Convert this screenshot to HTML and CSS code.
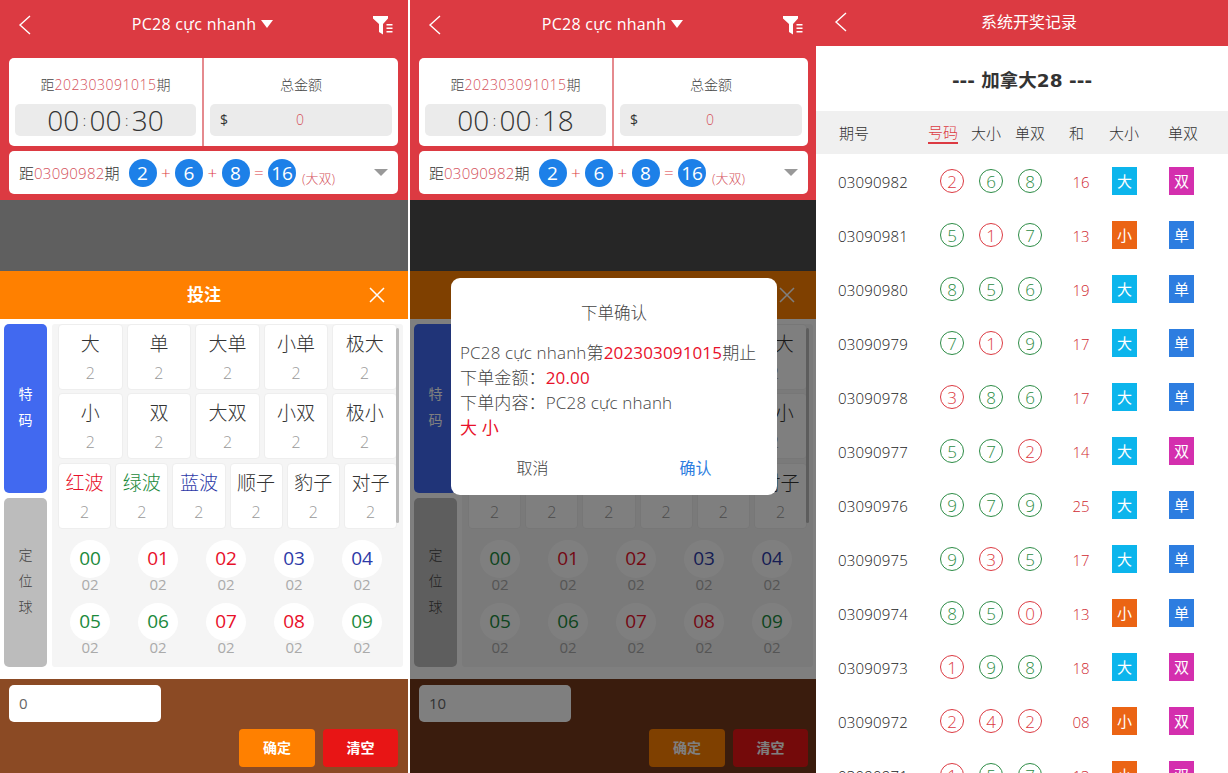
FILE: index.html
```html
<!DOCTYPE html>
<html lang="zh">
<head>
    <meta charset="UTF-8">
    <meta name="viewport" content="width=device-width, initial-scale=1.0">
    <title>PC28 投注</title>
    <link rel="stylesheet" href="styles.css">
</head>
<body>
    <div class="phone">
        <div class="phone-inner">
            <div class="top">
                <div class="nav">
                    <svg class="back" width="14" height="22" viewBox="0 0 14 22"><polyline points="12,2 2,11 12,20"/></svg>
                    <div class="nav-title">PC28 cực nhanh<span class="caret"></span></div>
                    <svg class="filter" width="20" height="19" viewBox="0 0 20 19"><path d="M0 0h15v2.500L10 8v10.500L6 16V8L0 2.500z"/><path d="M13.500 8h6v1.500h-6zM13.500 11.500h6V13h-6zM13.500 15h6v1.500h-6z"/></svg>
                </div>
                <div class="info">
                    <div class="info-col">
                        <div class="info-label">距<span class="pink">202303091015</span>期</div>
                        <div class="timer">00<i>:</i>00<i>:</i>30</div>
                    </div>
                    <div class="info-col">
                        <div class="info-label">总金额</div>
                        <div class="amount"><span class="dollar">$</span><span class="pink">0</span></div>
                    </div>
                </div>
                <div class="last">
                    <span class="last-label">距<span class="pink">03090982</span>期</span>
                    <b class="ball">2</b><em>+</em><b class="ball">6</b><em>+</em><b class="ball">8</b><em>=</em><b class="ball">16</b>
                    <span class="last-note">(大双)</span>
                    <span class="last-caret"></span>
                </div>
            </div>
            <div class="backdrop"></div>
            <div class="sheet-head">投注<svg class="close" width="18" height="18" viewBox="0 0 18 18"><path d="M2 2l14 14M16 2L2 16"/></svg></div>
            <div class="sheet-body">
                <div class="tabs">
                    <div class="tab tab-on">特<br>码</div>
                    <div class="tab">定<br>位<br>球</div>
                </div>
                <div class="content">
                    <div class="cells">
                        <div class="cell"><p>大</p><span>2</span></div>
                        <div class="cell"><p>单</p><span>2</span></div>
                        <div class="cell"><p>大单</p><span>2</span></div>
                        <div class="cell"><p>小单</p><span>2</span></div>
                        <div class="cell"><p>极大</p><span>2</span></div>
                    </div>
                    <div class="cells">
                        <div class="cell"><p>小</p><span>2</span></div>
                        <div class="cell"><p>双</p><span>2</span></div>
                        <div class="cell"><p>大双</p><span>2</span></div>
                        <div class="cell"><p>小双</p><span>2</span></div>
                        <div class="cell"><p>极小</p><span>2</span></div>
                    </div>
                    <div class="cells">
                        <div class="cell"><p class="red">红波</p><span>2</span></div>
                        <div class="cell"><p class="green">绿波</p><span>2</span></div>
                        <div class="cell"><p class="navy">蓝波</p><span>2</span></div>
                        <div class="cell"><p>顺子</p><span>2</span></div>
                        <div class="cell"><p>豹子</p><span>2</span></div>
                        <div class="cell"><p>对子</p><span>2</span></div>
                    </div>
                    <div class="scrollbar"></div>
                    <div class="nums">
                        <div class="num"><b class="green">00</b><span>02</span></div>
                        <div class="num"><b class="red">01</b><span>02</span></div>
                        <div class="num"><b class="red">02</b><span>02</span></div>
                        <div class="num"><b class="navy">03</b><span>02</span></div>
                        <div class="num"><b class="navy">04</b><span>02</span></div>
                        <div class="num"><b class="green">05</b><span>02</span></div>
                        <div class="num"><b class="green">06</b><span>02</span></div>
                        <div class="num"><b class="red">07</b><span>02</span></div>
                        <div class="num"><b class="red">08</b><span>02</span></div>
                        <div class="num"><b class="green">09</b><span>02</span></div>
                    </div>
                </div>
            </div>
            <div class="foot">
                <div class="foot-input">0</div>
                <div class="foot-btns">
                    <div class="btn btn-ok">确定</div>
                    <div class="btn btn-clear">清空</div>
                </div>
            </div>
        </div>
    </div>

    <div class="phone phone-dim">
        <div class="phone-inner">
            <div class="top">
                <div class="nav">
                    <svg class="back" width="14" height="22" viewBox="0 0 14 22"><polyline points="12,2 2,11 12,20"/></svg>
                    <div class="nav-title">PC28 cực nhanh<span class="caret"></span></div>
                    <svg class="filter" width="20" height="19" viewBox="0 0 20 19"><path d="M0 0h15v2.500L10 8v10.500L6 16V8L0 2.500z"/><path d="M13.500 8h6v1.500h-6zM13.500 11.500h6V13h-6zM13.500 15h6v1.500h-6z"/></svg>
                </div>
                <div class="info">
                    <div class="info-col">
                        <div class="info-label">距<span class="pink">202303091015</span>期</div>
                        <div class="timer">00<i>:</i>00<i>:</i>18</div>
                    </div>
                    <div class="info-col">
                        <div class="info-label">总金额</div>
                        <div class="amount"><span class="dollar">$</span><span class="pink">0</span></div>
                    </div>
                </div>
                <div class="last">
                    <span class="last-label">距<span class="pink">03090982</span>期</span>
                    <b class="ball">2</b><em>+</em><b class="ball">6</b><em>+</em><b class="ball">8</b><em>=</em><b class="ball">16</b>
                    <span class="last-note">(大双)</span>
                    <span class="last-caret"></span>
                </div>
            </div>
            <div class="backdrop"></div>
            <div class="sheet-head">投注<svg class="close" width="18" height="18" viewBox="0 0 18 18"><path d="M2 2l14 14M16 2L2 16"/></svg></div>
            <div class="sheet-body">
                <div class="tabs">
                    <div class="tab tab-on">特<br>码</div>
                    <div class="tab">定<br>位<br>球</div>
                </div>
                <div class="content">
                    <div class="cells">
                        <div class="cell"><p>大</p><span>2</span></div>
                        <div class="cell"><p>单</p><span>2</span></div>
                        <div class="cell"><p>大单</p><span>2</span></div>
                        <div class="cell"><p>小单</p><span>2</span></div>
                        <div class="cell"><p>极大</p><span>2</span></div>
                    </div>
                    <div class="cells">
                        <div class="cell"><p>小</p><span>2</span></div>
                        <div class="cell"><p>双</p><span>2</span></div>
                        <div class="cell"><p>大双</p><span>2</span></div>
                        <div class="cell"><p>小双</p><span>2</span></div>
                        <div class="cell"><p>极小</p><span>2</span></div>
                    </div>
                    <div class="cells">
                        <div class="cell"><p class="red">红波</p><span>2</span></div>
                        <div class="cell"><p class="green">绿波</p><span>2</span></div>
                        <div class="cell"><p class="navy">蓝波</p><span>2</span></div>
                        <div class="cell"><p>顺子</p><span>2</span></div>
                        <div class="cell"><p>豹子</p><span>2</span></div>
                        <div class="cell"><p>对子</p><span>2</span></div>
                    </div>
                    <div class="scrollbar"></div>
                    <div class="nums">
                        <div class="num"><b class="green">00</b><span>02</span></div>
                        <div class="num"><b class="red">01</b><span>02</span></div>
                        <div class="num"><b class="red">02</b><span>02</span></div>
                        <div class="num"><b class="navy">03</b><span>02</span></div>
                        <div class="num"><b class="navy">04</b><span>02</span></div>
                        <div class="num"><b class="green">05</b><span>02</span></div>
                        <div class="num"><b class="green">06</b><span>02</span></div>
                        <div class="num"><b class="red">07</b><span>02</span></div>
                        <div class="num"><b class="red">08</b><span>02</span></div>
                        <div class="num"><b class="green">09</b><span>02</span></div>
                    </div>
                </div>
            </div>
            <div class="foot">
                <div class="foot-input">10</div>
                <div class="foot-btns">
                    <div class="btn btn-ok">确定</div>
                    <div class="btn btn-clear">清空</div>
                </div>
            </div>
            <div class="mask"></div>
            <div class="dialog">
                <div class="dialog-title">下单确认</div>
                <div class="dialog-text">
                    <div>PC28 cực nhanh第<span class="red">202303091015</span>期止</div>
                    <div>下单金额：<span class="red">20.00</span></div>
                    <div>下单内容：PC28 cực nhanh</div>
                    <div class="red">大 小</div>
                </div>
                <div class="dialog-btns">
                    <div class="dialog-cancel">取消</div>
                    <div class="dialog-ok">确认</div>
                </div>
            </div>
        </div>
    </div>

    <div class="records">
        <div class="rec-nav">
            <svg class="back" width="14" height="22" viewBox="0 0 14 22"><polyline points="12,2 2,11 12,20"/></svg>
            系统开奖记录
        </div>
        <div class="rec-title">--- 加拿大28 ---</div>
        <div class="rec-head">
            <span>期号</span><span class="rec-active">号码</span><span>大小</span><span>单双</span><span>和</span><span>大小</span><span>单双</span>
        </div>
        <div class="rec-row"><span>03090982</span><i class="r">2</i><i class="g">6</i><i class="g">8</i><em>16</em><b class="t-big">大</b><b class="t-even">双</b></div>
        <div class="rec-row"><span>03090981</span><i class="g">5</i><i class="r">1</i><i class="g">7</i><em>13</em><b class="t-small">小</b><b class="t-odd">单</b></div>
        <div class="rec-row"><span>03090980</span><i class="g">8</i><i class="g">5</i><i class="g">6</i><em>19</em><b class="t-big">大</b><b class="t-odd">单</b></div>
        <div class="rec-row"><span>03090979</span><i class="g">7</i><i class="r">1</i><i class="g">9</i><em>17</em><b class="t-big">大</b><b class="t-odd">单</b></div>
        <div class="rec-row"><span>03090978</span><i class="r">3</i><i class="g">8</i><i class="g">6</i><em>17</em><b class="t-big">大</b><b class="t-odd">单</b></div>
        <div class="rec-row"><span>03090977</span><i class="g">5</i><i class="g">7</i><i class="r">2</i><em>14</em><b class="t-big">大</b><b class="t-even">双</b></div>
        <div class="rec-row"><span>03090976</span><i class="g">9</i><i class="g">7</i><i class="g">9</i><em>25</em><b class="t-big">大</b><b class="t-odd">单</b></div>
        <div class="rec-row"><span>03090975</span><i class="g">9</i><i class="r">3</i><i class="g">5</i><em>17</em><b class="t-big">大</b><b class="t-odd">单</b></div>
        <div class="rec-row"><span>03090974</span><i class="g">8</i><i class="g">5</i><i class="r">0</i><em>13</em><b class="t-small">小</b><b class="t-odd">单</b></div>
        <div class="rec-row"><span>03090973</span><i class="r">1</i><i class="g">9</i><i class="g">8</i><em>18</em><b class="t-big">大</b><b class="t-even">双</b></div>
        <div class="rec-row"><span>03090972</span><i class="r">2</i><i class="r">4</i><i class="r">2</i><em>08</em><b class="t-small">小</b><b class="t-even">双</b></div>
        <div class="rec-row"><span>03090971</span><i class="r">1</i><i class="g">5</i><i class="g">7</i><em>13</em><b class="t-small">小</b><b class="t-even">双</b></div>
    </div>
</body>
</html>
```

FILE: styles.css
```css
* {
    box-sizing: border-box;
}
html, body {
    height: 100%;
    overflow: hidden;
}
body {
    margin: 0;
    display: flex;
    background-color: #fff;
    font-family: "Open Sans", "Noto Sans CJK SC", sans-serif;
    font-size: 14px;
    font-weight: 300;
    color: #333;
}
p {
    margin: 0;
}
i, em {
    font-style: normal;
}
.red { color: #e8102a; }
.green { color: #1c8a3c; }
.navy { color: #2d3aa8; }
.pink { color: #d4505a; }

.phone {
    width: 408px;
    height: 773px;
    overflow: hidden;
    flex: none;
}
.phone-dim {
    width: 406px;
    margin-left: 2px;
}
.phone-inner {
    position: relative;
    width: 408px;
    height: 773px;
    display: flex;
    flex-direction: column;
}

/* top red area */
.top {
    height: 200px;
    flex: none;
    padding: 0 10px 0 9px;
    background-color: #dc3a42;
}
.nav {
    height: 58px;
    display: flex;
    align-items: flex-start;
    justify-content: space-between;
    color: #fff;
    padding: 14px 5px 0 9px;
}
.back {
    fill: none;
    stroke: #fff;
    stroke-width: 1.4;
}
.nav-title {
    font-size: 16px;
    font-weight: 400;
    letter-spacing: 0.3px;
    line-height: 20px;
}
.caret {
    display: inline-block;
    margin-left: 5px;
    vertical-align: 2px;
    border-left: 6.5px solid transparent;
    border-right: 6.5px solid transparent;
    border-top: 8px solid #fff;
}
.filter {
    fill: #fff;
    margin-top: 2px;
}
.info {
    height: 88px;
    display: flex;
    background-color: #fff;
    border-radius: 5px;
}
.info-col {
    flex: 1;
    padding: 0 6px;
    text-align: center;
}
.info-col:first-child {
    flex: none;
    width: 195px;
    border-right: 2px solid #e58a8e;
}
.info-label {
    height: 46px;
    padding-top: 16px;
    line-height: 22px;
    font-size: 14px;
    color: #444;
}
.info-label .pink {
    letter-spacing: 0.5px;
}
.timer {
    height: 32px;
    line-height: 32px;
    font-size: 28px;
    color: #333;
    background-color: #ebebeb;
    border-radius: 5px;
}
.timer i {
    font-size: 14px;
    vertical-align: 5px;
    margin: 0 3.5px;
}
.amount {
    height: 32px;
    line-height: 32px;
    display: flex;
    padding: 0 88px 0 10px;
    justify-content: space-between;
    background-color: #ebebeb;
    border-radius: 5px;
}
.dollar {
    font-weight: 400;
}
.last {
    height: 43px;
    margin-top: 5px;
    padding: 0 10px;
    display: flex;
    align-items: center;
    background-color: #fff;
    border-radius: 5px;
}
.last-label {
    margin-right: 9px;
    font-size: 15px;
    color: #333;
}
.last-label .pink {
    letter-spacing: 0.25px;
}
.ball {
    min-width: 28px;
    height: 28px;
    line-height: 28px;
    border-radius: 50%;
    text-align: center;
    font-size: 19px;
    font-weight: 400;
    color: #fff;
    background-color: #1d80e8;
}
.last em {
    width: 18.500px;
    text-align: center;
    font-size: 17px;
    color: #dc3a42;
}
.last-note {
    margin: 10px 0 0 6px;
    font-size: 13px;
    color: #d4505a;
}
.last-caret {
    margin-left: auto;
    border-left: 7px solid transparent;
    border-right: 7px solid transparent;
    border-top: 7px solid #999;
}

.backdrop {
    height: 71px;
    flex: none;
    background-color: #5f5f5f;
}
.sheet-head {
    position: relative;
    height: 48px;
    flex: none;
    line-height: 48px;
    text-align: center;
    font-size: 17px;
    font-weight: bold;
    color: #fff;
    background-color: #ff8000;
}
.close {
    position: absolute;
    right: 22px;
    top: 15px;
    stroke: #fff;
    stroke-width: 1.5;
}
.sheet-body {
    height: 360px;
    flex: none;
    padding: 5px 5px 12px 4px;
    display: flex;
    gap: 5px;
    background-color: #fff;
}
.tabs {
    width: 43px;
    flex: none;
    display: flex;
    flex-direction: column;
    gap: 5px;
}
.tab {
    flex: 1;
    display: flex;
    align-items: center;
    justify-content: center;
    padding-bottom: 3px;
    text-align: center;
    line-height: 26px;
    color: #444;
    background-color: #bcbcbc;
    border-radius: 5px;
}
.tab-on {
    font-weight: 400;
    color: #fff;
    background-color: #4169f0;
}
.content {
    position: relative;
    flex: 1;
    padding: 0 6px;
    background-color: #f5f5f5;
    border-radius: 3px;
}
.cells {
    display: flex;
    gap: 4px;
    height: 66px;
    margin-bottom: 3px;
}
.cells:nth-child(2) {
    margin-bottom: 4px;
}
.cell {
    flex: 1;
    text-align: center;
    background-color: #fff;
    border: 1px solid #eee;
    border-radius: 4px;
    min-width: 0;
}
.cell p {
    font-size: 19px;
    line-height: 26px;
    margin-top: 6px;
}
.cell span {
    display: block;
    font-size: 16px;
    line-height: 24px;
    margin-top: 4px;
    color: #999;
}
.scrollbar {
    position: absolute;
    right: 4px;
    top: 4px;
    width: 3px;
    height: 195px;
    background-color: #bbb;
    border-radius: 2px;
}
.nums {
    display: grid;
    grid-template-columns: repeat(5, 68px);
    margin-left: -2px;
    padding-top: 8px;
}
.num {
    height: 63px;
    text-align: center;
}
.num b {
    display: block;
    width: 40px;
    height: 38px;
    margin: 0 auto;
    line-height: 37px;
    font-size: 19px;
    font-weight: 400;
    background-color: #fff;
    border-radius: 50%;
}
.num span {
    display: block;
    margin-top: -3px;
    font-size: 15px;
    line-height: 18px;
    font-weight: 400;
    color: #aaa;
}
.foot {
    flex: 1;
    padding: 6px 10px 0 9px;
    background-color: #8b4a24;
}
.foot-input {
    width: 152px;
    height: 37px;
    line-height: 37px;
    padding-left: 10px;
    font-size: 15px;
    font-weight: 400;
    color: #666;
    background-color: #fff;
    border-radius: 5px;
}
.foot-btns {
    display: flex;
    justify-content: flex-end;
    gap: 8px;
    margin-top: 7px;
}
.btn {
    width: 75px;
    height: 38px;
    line-height: 38px;
    text-align: center;
    font-weight: bold;
    color: #fff;
    border-radius: 4px;
}
.btn-ok {
    width: 76px;
    background-color: #ff8000;
}
.btn-clear { background-color: #e81515; }

/* dimmed copy */
.phone-dim .backdrop { background-color: #4c4c4c; }
.phone-dim .foot { background-color: #74391a; }
.mask {
    position: absolute;
    left: 0;
    right: 0;
    top: 200px;
    bottom: 0;
    background-color: rgba(0, 0, 0, 0.5);
}
.dialog {
    position: absolute;
    left: 41px;
    top: 278px;
    width: 326px;
    height: 217px;
    padding: 0 9px;
    background-color: #fff;
    border-radius: 9px;
    color: #444;
}
.dialog-title {
    text-align: center;
    font-size: 16.5px;
    line-height: 22px;
    padding-top: 24px;
    height: 62px;
}
.dialog-text {
    font-size: 17px;
    line-height: 25px;
    letter-spacing: 0.15px;
}
.dialog-text .red {
    font-weight: 400;
}
.dialog-btns {
    display: flex;
    margin: 16px -9px 0;
    text-align: center;
    font-size: 16px;
    line-height: 24px;
}
.dialog-btns div {
    flex: 1;
}
.dialog-ok {
    font-weight: 400;
    color: #2d7de0;
}

/* records panel */
.records {
    width: 412px;
    margin-left: auto;
    height: 773px;
    overflow: hidden;
    flex: none;
}
.rec-nav {
    position: relative;
    height: 46px;
    line-height: 44px;
    padding-left: 14px;
    text-align: center;
    font-size: 16px;
    font-weight: 400;
    color: #fff;
    background-color: #dc3a42;
}
.rec-nav .back {
    position: absolute;
    left: 18px;
    top: 11px;
}
.rec-title {
    height: 65px;
    line-height: 70px;
    text-align: center;
    font-family: "DejaVu Sans", "Noto Sans CJK SC", sans-serif;
    font-size: 18.5px;
    font-weight: bold;
    color: #333;
}
.rec-head {
    height: 43px;
    padding-left: 23px;
    display: grid;
    grid-template-columns: 89px 43px 44px 54px 40px 59px 30px;
    align-items: center;
    font-size: 15px;
    background-color: #f0f0f0;
}
.rec-active {
    width: 30px;
    color: #dc3a42;
    border-bottom: 2px solid #dc3a42;
}
.rec-row {
    height: 54px;
    padding-left: 22px;
    display: grid;
    grid-template-columns: 102px 39px 39px 24px 70px 57px 25px;
    align-items: center;
}
.rec-row span {
    padding-top: 2px;
    font-size: 15px;
    letter-spacing: 0.2px;
    color: #222;
}
.rec-row i {
    width: 24px;
    height: 24px;
    line-height: 23px;
    text-align: center;
    border: 1px solid;
    border-radius: 50%;
    font-size: 17px;
}
.rec-row i.r { color: #dc3a42; }
.rec-row i.g { color: #2d8c46; }
.rec-row em {
    padding: 2px 0 0 8px;
    text-align: center;
    font-size: 15px;
    color: #d02a32;
}
.rec-row b {
    width: 25px;
    height: 28px;
    line-height: 28px;
    text-align: center;
    font-size: 15px;
    font-weight: 400;
    color: #fff;
}
.t-big { background-color: #0cb5ec; }
.t-small { background-color: #eb6414; }
.t-odd { background-color: #2d7de0; }
.t-even { background-color: #d42fae; }
```
